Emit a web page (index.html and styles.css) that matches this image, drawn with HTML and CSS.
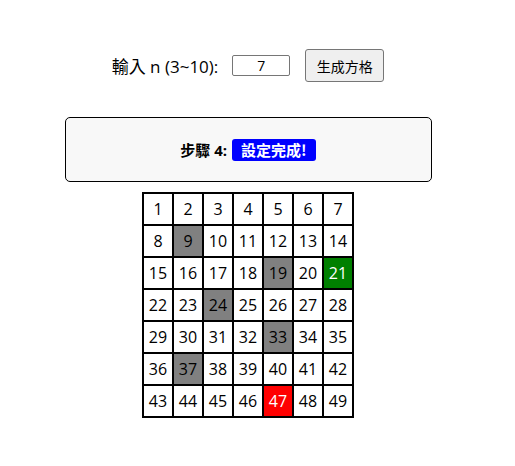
FILE: index.html
```html
<!DOCTYPE html>
<html lang="zh-Hant">
<head>
<meta charset="utf-8">
<title>方格</title>
<link rel="stylesheet" href="styles.css">
</head>
<body>
<div class="page">
  <div class="controls">
    <label class="label" for="n">輸入 n (3~10):</label>
    <input class="num" id="n" type="text" value="7">
    <button class="btn" type="button">生成方格</button>
  </div>
  <div class="status">
    <span class="step">步驟 4:</span>
    <span class="badge">設定完成!</span>
  </div>
  <div class="grid">
    <div class="cell">1</div><div class="cell">2</div><div class="cell">3</div><div class="cell">4</div><div class="cell">5</div><div class="cell">6</div><div class="cell">7</div>
    <div class="cell">8</div><div class="cell gray">9</div><div class="cell">10</div><div class="cell">11</div><div class="cell">12</div><div class="cell">13</div><div class="cell">14</div>
    <div class="cell">15</div><div class="cell">16</div><div class="cell">17</div><div class="cell">18</div><div class="cell gray">19</div><div class="cell">20</div><div class="cell green">21</div>
    <div class="cell">22</div><div class="cell">23</div><div class="cell gray">24</div><div class="cell">25</div><div class="cell">26</div><div class="cell">27</div><div class="cell">28</div>
    <div class="cell">29</div><div class="cell">30</div><div class="cell">31</div><div class="cell">32</div><div class="cell gray">33</div><div class="cell">34</div><div class="cell">35</div>
    <div class="cell">36</div><div class="cell gray">37</div><div class="cell">38</div><div class="cell">39</div><div class="cell">40</div><div class="cell">41</div><div class="cell">42</div>
    <div class="cell">43</div><div class="cell">44</div><div class="cell">45</div><div class="cell">46</div><div class="cell red">47</div><div class="cell">48</div><div class="cell">49</div>
  </div>
</div>
</body>
</html>
```

FILE: styles.css
```css
html, body {
  margin: 0;
  padding: 0;
  background: #ffffff;
}

body {
  font-family: "Open Sans", "Noto Sans CJK TC", sans-serif;
  color: #000;
}

.page {
  width: 496px;
  padding-top: 49px;
}

.controls {
  display: flex;
  justify-content: center;
  align-items: center;
  height: 33px;
}

.label {
  font-size: 17px;
  margin-right: 14px;
}

.num {
  box-sizing: border-box;
  width: 58px;
  height: 21px;
  border: 1px solid #767676;
  border-radius: 2px;
  padding: 0 2px;
  text-align: center;
  font-family: "Open Sans", sans-serif;
  font-size: 14px;
  margin-right: 15px;
}

.btn {
  box-sizing: border-box;
  width: 79px;
  height: 33px;
  background: #efefef;
  border: 1px solid #767676;
  border-radius: 3px;
  font-family: "Noto Sans CJK TC", sans-serif;
  font-size: 14px;
  color: #000;
  padding: 0;
}

.status {
  box-sizing: border-box;
  width: 367px;
  height: 65px;
  margin: 35px auto 0;
  border: 1px solid #000;
  border-radius: 5px;
  background: #f8f8f8;
  display: flex;
  justify-content: center;
  align-items: center;
  gap: 5px;
  font-weight: bold;
  font-size: 15px;
}

.step {
  font-family: "Open Sans", "Noto Sans CJK TC", sans-serif;
}

.badge {
  background: #0000ff;
  color: #fff;
  border-radius: 3px;
  padding: 0 9px;
  height: 22px;
  line-height: 22px;
  font-family: "Noto Sans CJK TC", sans-serif;
}

.grid {
  display: grid;
  grid-template-columns: repeat(7, 30px);
  grid-auto-rows: 32px;
  width: max-content;
  margin: 10px auto 0;
  border: 1px solid #000;
}

.cell {
  box-sizing: border-box;
  border: 1px solid #000;
  display: flex;
  justify-content: center;
  align-items: center;
  font-size: 16px;
  background: #fff;
}

.gray {
  background: #808080;
}

.green {
  background: #008000;
  color: #fff;
}

.red {
  background: #ff0000;
  color: #fff;
}
```
